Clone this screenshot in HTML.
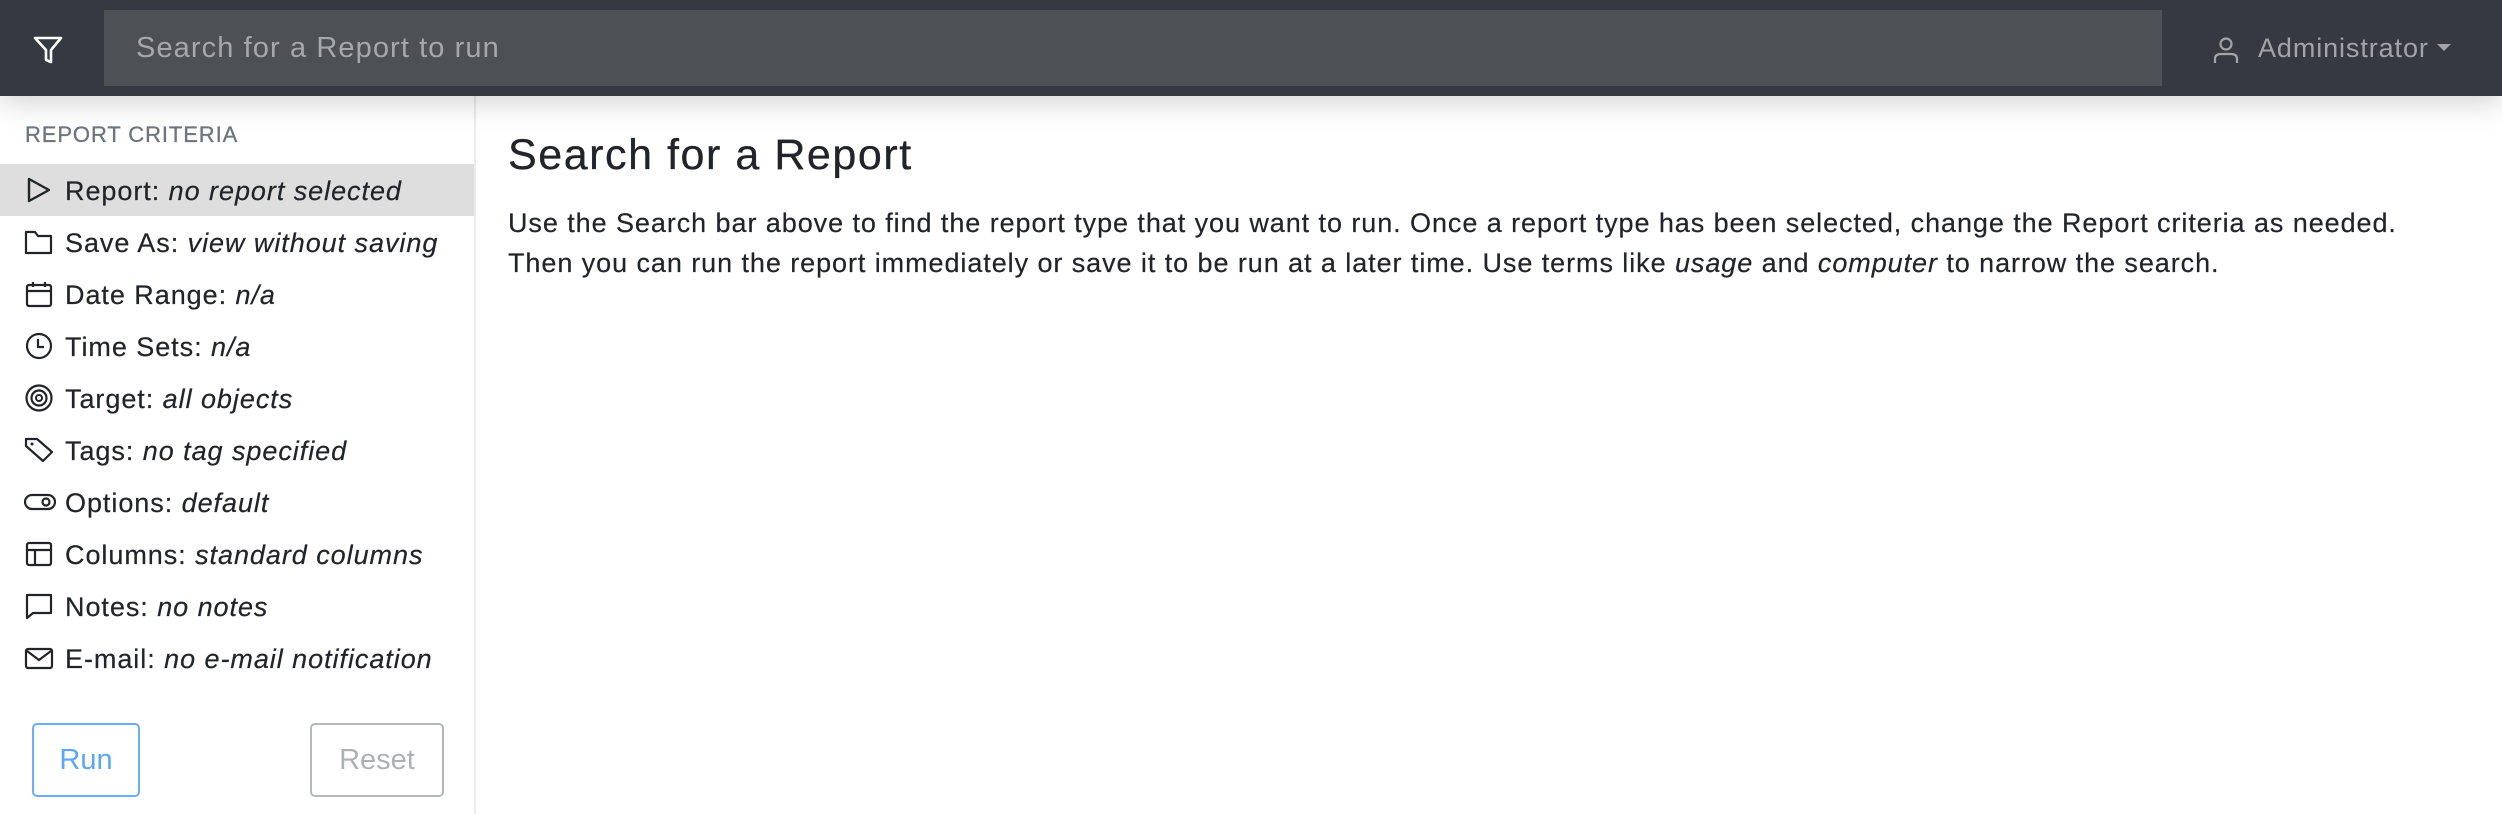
<!DOCTYPE html>
<html><head><meta charset="utf-8"><style>
*{box-sizing:border-box;margin:0;padding:0}
body{width:2502px;height:814px;overflow:hidden;background:#fff;font-family:"Liberation Sans",sans-serif;color:#212529;position:relative}
.nav{position:absolute;left:0;top:0;width:2502px;height:96px;background:#343a40;box-shadow:0 6px 28px rgba(0,0,0,.18);z-index:2}
.search{position:absolute;left:104px;top:10px;width:2058px;height:76px;background:#4c5156;color:#a5a8ab;font-size:29px;line-height:76px;padding-left:32px;letter-spacing:1.1px}
.admin{position:absolute;left:2258px;top:28px;color:#a2a5a8;font-size:27px;line-height:40px;letter-spacing:.9px}
.side{position:absolute;left:0;top:96px;width:476px;height:718px;border-right:2px solid #ececec;background:#fff}
.lbl{position:absolute;left:25px;top:26px;font-size:22px;color:#6c757d;letter-spacing:.9px;-webkit-text-stroke:.3px #6c757d}
.row{position:absolute;left:0;width:474px;height:52px;font-size:27px;line-height:54px;padding-left:65px;white-space:nowrap;letter-spacing:.95px;-webkit-text-stroke:.2px #212529}
.row i{font-style:italic}
.row svg{position:absolute;left:24px;top:12px}
.act{background:#dedede}
.btn{position:absolute;top:627px;height:74px;border:2px solid;border-radius:5px;font-size:29px;line-height:70px;text-align:center}
h1{position:absolute;left:508px;top:131px;font-size:43px;font-weight:normal;letter-spacing:1.55px;-webkit-text-stroke:.3px #212529}
p{position:absolute;left:508px;top:203px;font-size:27px;line-height:40px;white-space:nowrap;letter-spacing:.93px;-webkit-text-stroke:.2px #212529}
</style></head><body>
<div class="nav">
<svg style="position:absolute;left:33px;top:36px" width="30" height="28" viewBox="0 0 30 28"><path d="M2 2H28L18 14V26L13 24V14Z" fill="none" stroke="#fff" stroke-width="2.6" stroke-linejoin="round"/></svg>
<div class="search">Search for a Report to run</div>
<svg style="position:absolute;left:2212px;top:36px" width="28" height="28" viewBox="0 0 28 28"><circle cx="14" cy="8" r="5.5" fill="none" stroke="#a2a5a8" stroke-width="2.2"/><path d="M3 27V23Q3 18 9 18H19Q25 18 25 23V27" fill="none" stroke="#a2a5a8" stroke-width="2.2"/></svg>
<div class="admin">Administrator <span style="display:inline-block;width:0;height:0;border-left:7px solid transparent;border-right:7px solid transparent;border-top:7px solid #a2a5a8;vertical-align:6px"></span></div>
</div>
<div class="side">
<div class="lbl">REPORT CRITERIA</div>
<div class="row act" style="top:68px"><svg width="30" height="28" viewBox="0 0 30 28"><path d="M5 3L25 14L5 25Z" fill="none" stroke="#212529" stroke-width="2.4" stroke-linejoin="round"/></svg>Report: <i>no report selected</i></div>
<div class="row" style="top:120px"><svg width="30" height="28" viewBox="0 0 30 28"><path d="M2 4H11L14 8H27V25H2Z" fill="none" stroke="#212529" stroke-width="2.2" stroke-linejoin="round"/></svg>Save As: <i>view without saving</i></div>
<div class="row" style="top:172px"><svg width="30" height="28" viewBox="0 0 30 28"><rect x="3" y="5" width="24" height="21" rx="2" fill="none" stroke="#212529" stroke-width="2.2"/><path d="M3 11H27M9 2V7M21 2V7" stroke="#212529" stroke-width="2.2"/></svg>Date Range: <i>n/a</i></div>
<div class="row" style="top:224px"><svg width="30" height="28" viewBox="0 0 30 28"><circle cx="15" cy="14" r="12" fill="none" stroke="#212529" stroke-width="2.2"/><path d="M14 7V15H20" fill="none" stroke="#212529" stroke-width="2.2"/></svg>Time Sets: <i>n/a</i></div>
<div class="row" style="top:276px"><svg width="30" height="28" viewBox="0 0 30 28"><circle cx="15" cy="14" r="12.5" fill="none" stroke="#212529" stroke-width="2.2"/><circle cx="15" cy="14" r="7.5" fill="none" stroke="#212529" stroke-width="2.2"/><circle cx="15" cy="14" r="3" fill="none" stroke="#212529" stroke-width="2"/></svg>Target: <i>all objects</i></div>
<div class="row" style="top:328px"><svg width="30" height="28" viewBox="0 0 30 28"><path d="M2 3H13L28 16L19 25L2 10Z" fill="none" stroke="#212529" stroke-width="2.2" stroke-linejoin="round"/><circle cx="8" cy="8" r="1.5" fill="#212529"/></svg>Tags: <i>no tag specified</i></div>
<div class="row" style="top:380px"><svg width="32" height="28" viewBox="0 0 32 28"><rect x="1" y="7" width="30" height="14" rx="7" fill="none" stroke="#212529" stroke-width="2.2"/><circle cx="22" cy="14" r="3.5" fill="none" stroke="#212529" stroke-width="2.2"/></svg>Options: <i>default</i></div>
<div class="row" style="top:432px"><svg width="30" height="28" viewBox="0 0 30 28"><rect x="3" y="3" width="24" height="22" rx="2" fill="none" stroke="#212529" stroke-width="2.2"/><path d="M3 10H27M11 10V25" stroke="#212529" stroke-width="2.2"/></svg>Columns: <i>standard columns</i></div>
<div class="row" style="top:484px"><svg width="30" height="28" viewBox="0 0 30 28"><path d="M3 3H27V21H9L3 26Z" fill="none" stroke="#212529" stroke-width="2.2" stroke-linejoin="round"/></svg>Notes: <i>no notes</i></div>
<div class="row" style="top:536px"><svg width="30" height="28" viewBox="0 0 30 28"><rect x="2" y="5" width="26" height="19" rx="2" fill="none" stroke="#212529" stroke-width="2.2"/><path d="M3 7L15 16L27 7" fill="none" stroke="#212529" stroke-width="2.2"/></svg>E-mail: <i>no e-mail notification</i></div>
<div class="btn" style="left:32px;width:108px;border-color:#6aaefb;color:#5aa6fb">Run</div>
<div class="btn" style="left:310px;width:134px;border-color:#b5b8bb;color:#aeb1b4">Reset</div>
</div>
<h1>Search for a Report</h1>
<p>Use the Search bar above to find the report type that you want to run. Once a report type has been selected, change the Report criteria as needed.<br>Then you can run the report immediately or save it to be run at a later time. Use terms like <i>usage</i> and <i>computer</i> to narrow the search.</p>
</body></html>
